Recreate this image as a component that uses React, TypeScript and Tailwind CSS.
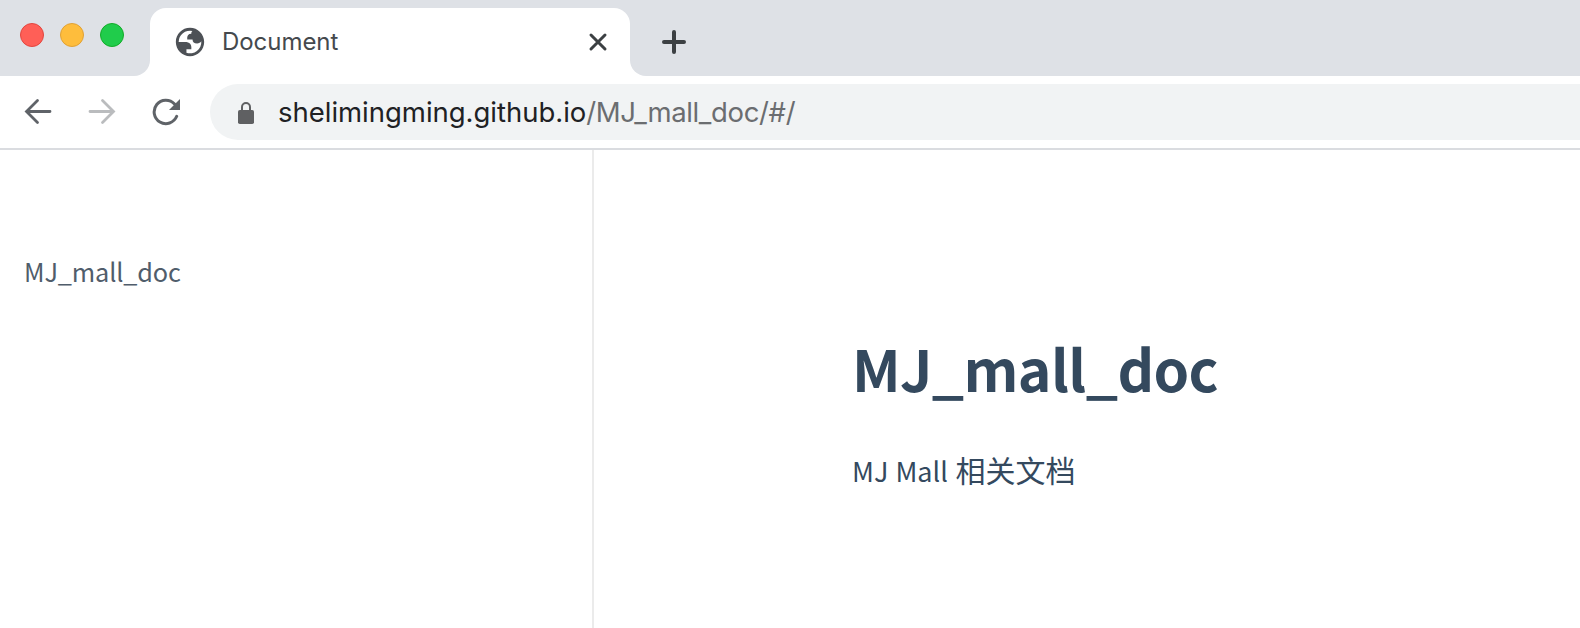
const CONTENT_FONT = "font-['Noto_Sans_CJK_SC',sans-serif]";
const CHROME_FONT = "font-[Inter,sans-serif]";

function TabStrip() {
  return (
    <header className="flex h-[76px] items-end bg-[#dee1e6]">
      <div className="flex h-full w-[150px] shrink-0 bg-[linear-gradient(#dee1e6_50%,#fff_50%)]">
        <div className="flex h-full w-full gap-4 rounded-br-[16px] bg-[#dee1e6] pl-5 pt-[23px]">
          <span className="size-6 rounded-full border border-[#e2463f] bg-[#ff5f57]" />
          <span className="size-6 rounded-full border border-[#e0a135] bg-[#febd3c]" />
          <span className="size-6 rounded-full border border-[#12ac28] bg-[#20cc4b]" />
        </div>
      </div>
      <div className="flex h-[68px] w-[480px] shrink-0 items-center rounded-t-[16px] bg-white pl-[23px] pr-[21px]">
        <svg className="size-[34px] shrink-0" viewBox="0 0 24 24" fill="#4d5156">
          <path fillRule="evenodd" d="M12 2C6.48 2 2 6.48 2 12s4.48 10 10 10 10-4.48 10-10S17.52 2 12 2zM4 12h4.4c3.407.022 4.922 1.73 4.543 5.127H9.488v2.47a8.004 8.004 0 0 0 10.498-8.083C19.327 12.504 18.332 13 17 13c-2.137 0-3.206-.916-3.206-2.75h-3.748c-.274-2.728.683-4.092 2.87-4.092 0-.975.327-1.597.811-1.97A8.004 8.004 0 0 0 4 12z" />
        </svg>
        <span className={`${CHROME_FONT} ml-[15px] grow text-[24px] leading-8 tracking-[-0.05px] text-[#45494d]`}>Document</span>
        <svg className="size-[22px]" viewBox="0 0 22 22" stroke="#3c4043" strokeWidth="3" strokeLinecap="round">
          <path d="M4 4l14 14M18 4L4 18" />
        </svg>
      </div>
      <div className="flex h-[68px] grow bg-[linear-gradient(#dee1e6_50%,#fff_50%)]">
        <div className="flex h-full grow items-center rounded-bl-[16px] bg-[#dee1e6] pl-8">
          <svg className="size-6" viewBox="0 0 24 24" stroke="#3c4043" strokeWidth="4" strokeLinecap="round">
            <path d="M2 12h20M12 2v20" />
          </svg>
        </div>
      </div>
    </header>
  );
}

function Toolbar() {
  return (
    <div className="flex h-[74px] items-center border-b-2 border-[#dadce0] bg-white pl-6">
      <svg className="h-7 w-7 shrink-0" viewBox="0 0 28 28" fill="none" stroke="#5f6368" strokeWidth="2.8" strokeLinecap="round">
        <path d="M26 13.500H3M13.500 2.500l-11 11 11 11" />
      </svg>
      <svg className="ml-9 h-7 w-7 shrink-0" viewBox="0 0 28 28" fill="none" stroke="#babcbe" strokeWidth="2.8" strokeLinecap="round">
        <path d="M2 13.500h23M14.500 2.500l11 11-11 11" />
      </svg>
      <svg className="ml-9 h-7 w-7 shrink-0" viewBox="0 0 28 28" fill="none" stroke="#5f6368" strokeWidth="3" strokeLinecap="round">
        <path d="M24.700 18.300A11.700 11.700 0 1 1 22.500 6" />
        <path d="M28 1v11H17z" fill="#5f6368" stroke="none" />
      </svg>
      <div className="ml-[30px] flex h-14 grow items-center rounded-l-full bg-[#f1f3f4] pl-7">
        <svg className="mt-px h-[22px] w-4 shrink-0" viewBox="0 0 16 22" fill="none">
          <rect y="8" width="16" height="14" rx="1.800" fill="#5f6062" />
          <path d="M4 8V5a4 4 0 0 1 8 0v3" stroke="#5f6062" strokeWidth="2" />
        </svg>
        <span className={`${CHROME_FONT} ml-6 whitespace-nowrap text-[27.5px] leading-9 tracking-[-0.35px] text-[#6b6d70]`}>
          <span className="tracking-[-0.02px] text-[#202124]">shelimingming.github.io</span>/MJ_mall_doc/#/
        </span>
      </div>
    </div>
  );
}

export default function App() {
  return (
    <div className="flex h-[628px] w-[1580px] flex-col overflow-hidden bg-white">
      <TabStrip />
      <Toolbar />
      <main className={`${CONTENT_FONT} flex grow text-[#34495e]`}>
        <aside className="w-[594px] shrink-0 border-r-2 border-[#ebebeb] pl-6 pt-[101px]">
          <a className="block text-[25.3px] leading-10 tracking-[-0.15px] text-[#505d6b]">MJ_mall_doc</a>
        </aside>
        <article className="grow pl-[258px] pt-[175px]">
          <h1 className="text-[57px] font-bold leading-[84px] tracking-[-0.6px]">MJ_mall_doc</h1>
          <p className="mt-[38px] text-[27px] leading-[44px] [word-spacing:1px]">
            MJ Mall <span className="ml-[0.5px] text-[30px]">相关文档</span>
          </p>
        </article>
      </main>
    </div>
  );
}
